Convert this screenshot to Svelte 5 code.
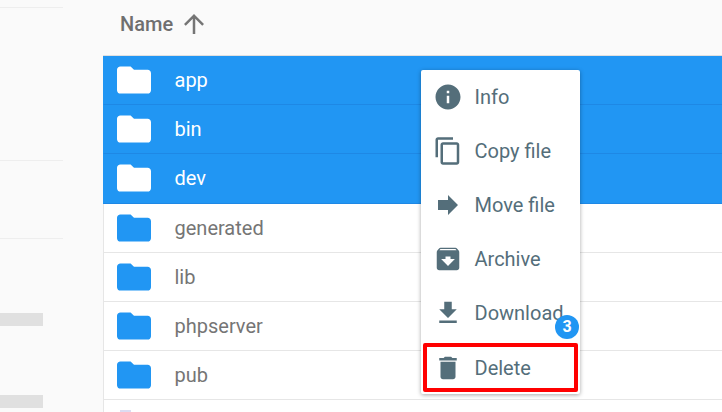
<script>
	const folders = [
		{ name: 'app', selected: true },
		{ name: 'bin', selected: true },
		{ name: 'dev', selected: true },
		{ name: 'generated' },
		{ name: 'lib' },
		{ name: 'phpserver' },
		{ name: 'pub' }
	];
	const folderPath = 'M10 4H4c-1.1 0-2 .9-2 2v12c0 1.1.9 2 2 2h16c1.1 0 2-.9 2-2V8c0-1.1-.9-2-2-2h-8l-2-2z';
	const menu = [
		{ label: 'Info', path: 'M12 2C6.48 2 2 6.48 2 12s4.48 10 10 10 10-4.48 10-10S17.52 2 12 2zm1 15h-2v-6h2v6zm0-8h-2V7h2v2z' },
		{ label: 'Copy file', path: 'M16 1H4c-1.1 0-2 .9-2 2v14h2V3h12V1zm3 4H8c-1.1 0-2 .9-2 2v14c0 1.1.9 2 2 2h11c1.1 0 2-.9 2-2V7c0-1.1-.9-2-2-2zm0 16H8V7h11v14z' },
		{ label: 'Move file', path: 'M12 4v4H4v8h8v4l8-8z' },
		{ label: 'Archive', path: 'M20.54 5.23l-1.39-1.68C18.88 3.21 18.47 3 18 3H6c-.47 0-.88.21-1.16.55L3.46 5.23C3.17 5.57 3 6.02 3 6.5V19c0 1.1.9 2 2 2h14c1.1 0 2-.9 2-2V6.5c0-.48-.17-.93-.46-1.27zM12 17.5L6.5 12H10v-2h4v2h3.5L12 17.5zM5.12 5l.81-1h12l.94 1H5.12z' },
		{ label: 'Download', path: 'M19 9h-4V3H9v6H5l7 7 7-7zM5 18v2h14v-2H5z' },
		{ label: 'Delete', path: 'M6 19c0 1.1.9 2 2 2h8c1.1 0 2-.9 2-2V7H6v12zM19 4h-3.5l-1-1h-5l-1 1H5v2h14V4z', outlined: true }
	];
</script>

<div class="page">
	<aside class="sidebar">
		<div class="rule first"></div>
		<div class="rule second"></div>
		<div class="rule third"></div>
		<div class="block one"></div>
		<div class="block two"></div>
	</aside>

	<main class="content">
		<header class="head">
			<span>Name</span>
			<svg class="sort" viewBox="0 0 24 24"><path d="M4 12l1.41 1.41L11 7.83V20h2V7.83l5.58 5.59L20 12l-8-8z" /></svg>
		</header>
		<ul class="rows">
			{#each folders as folder}
				<li class="row" class:selected={folder.selected}>
					<svg class="folder" viewBox="2 4 20 16"><path d={folderPath} /></svg>
					<span>{folder.name}</span>
				</li>
			{/each}
			<li class="row stub"><span class="stub-icon"></span></li>
		</ul>
	</main>

	<div class="menu">
		{#each menu as item}
			<div class="item" class:outlined={item.outlined}>
				<svg class="icon" viewBox="0 0 24 24"><path d={item.path} /></svg>
				<span>{item.label}</span>
			</div>
		{/each}
		<span class="badge">3</span>
	</div>
</div>

<style>
	:global(body) {
		margin: 0;
		background: #fafafa;
	}

	.page {
		position: relative;
		display: flex;
		width: 722px;
		height: 412px;
		overflow: hidden;
		font-family: Roboto, "Liberation Sans", sans-serif;
	}

	.sidebar {
		position: relative;
		flex: 0 0 103px;
		background: #fafafa;
	}

	.rule {
		position: absolute;
		left: 0;
		width: 63px;
		height: 1px;
		background: #eeeeee;
	}
	.first { top: 7px; }
	.second { top: 160px; }
	.third { top: 238px; }

	.block {
		position: absolute;
		left: 0;
		width: 43px;
		height: 13px;
		background: #e0e0e0;
	}
	.one { top: 313px; }
	.two { top: 395px; }

	.content {
		flex: 1;
		min-width: 0;
	}

	.head {
		display: flex;
		align-items: center;
		gap: 6px;
		box-sizing: border-box;
		height: 56px;
		padding: 0 0 8px 17px;
		font-size: 20px;
		font-weight: 500;
		color: #6f6f6f;
		border-bottom: 1px solid #e0e0e0;
	}

	.sort {
		width: 30px;
		height: 30px;
		fill: #757575;
	}

	.rows {
		margin: 0;
		padding: 0;
		list-style: none;
	}

	.row {
		display: flex;
		align-items: center;
		box-sizing: border-box;
		height: 49.2px;
		padding-left: 13px;
		background: #ffffff;
		border-left: 1px solid #e6e6e6;
		border-bottom: 1px solid #e6e6e6;
		font-size: 20px;
		color: #757575;
	}

	.row.selected {
		background: #2196f3;
		color: #ffffff;
		border-left-color: #2196f3;
		border-bottom-color: #1e88e5;
	}

	.folder {
		flex: none;
		width: 34px;
		height: 28px;
		margin-right: 23.5px;
		fill: #2196f3;
	}

	.selected .folder {
		fill: #ffffff;
	}

	.stub-icon {
		width: 11px;
		height: 20px;
		margin: 10px 0 0 3px;
		align-self: flex-start;
		background: #dcdcf2;
	}

	.menu {
		position: absolute;
		left: 421px;
		top: 70px;
		width: 159px;
		height: 324px;
		background: #ffffff;
		border-radius: 2px;
		box-shadow: 0 1px 4px rgba(0, 0, 0, 0.35);
	}

	.item {
		position: relative;
		display: flex;
		align-items: center;
		box-sizing: border-box;
		height: 54px;
		padding-left: 11.5px;
		font-size: 20px;
		color: #546e7a;
	}

	.item.outlined {
		height: 49px;
		margin: 3px 2px 0 2px;
		padding-left: 5.5px;
		border: 4px solid #ff0000;
		border-radius: 2px;
	}

	.icon {
		flex: none;
		width: 30px;
		height: 30px;
		margin-right: 12px;
		fill: #546e7a;
	}

	.badge {
		position: absolute;
		left: 134px;
		top: 245px;
		width: 24px;
		height: 24px;
		line-height: 24px;
		text-align: center;
		border-radius: 50%;
		background: #2196f3;
		color: #ffffff;
		font-size: 16px;
		font-weight: 700;
	}
</style>
